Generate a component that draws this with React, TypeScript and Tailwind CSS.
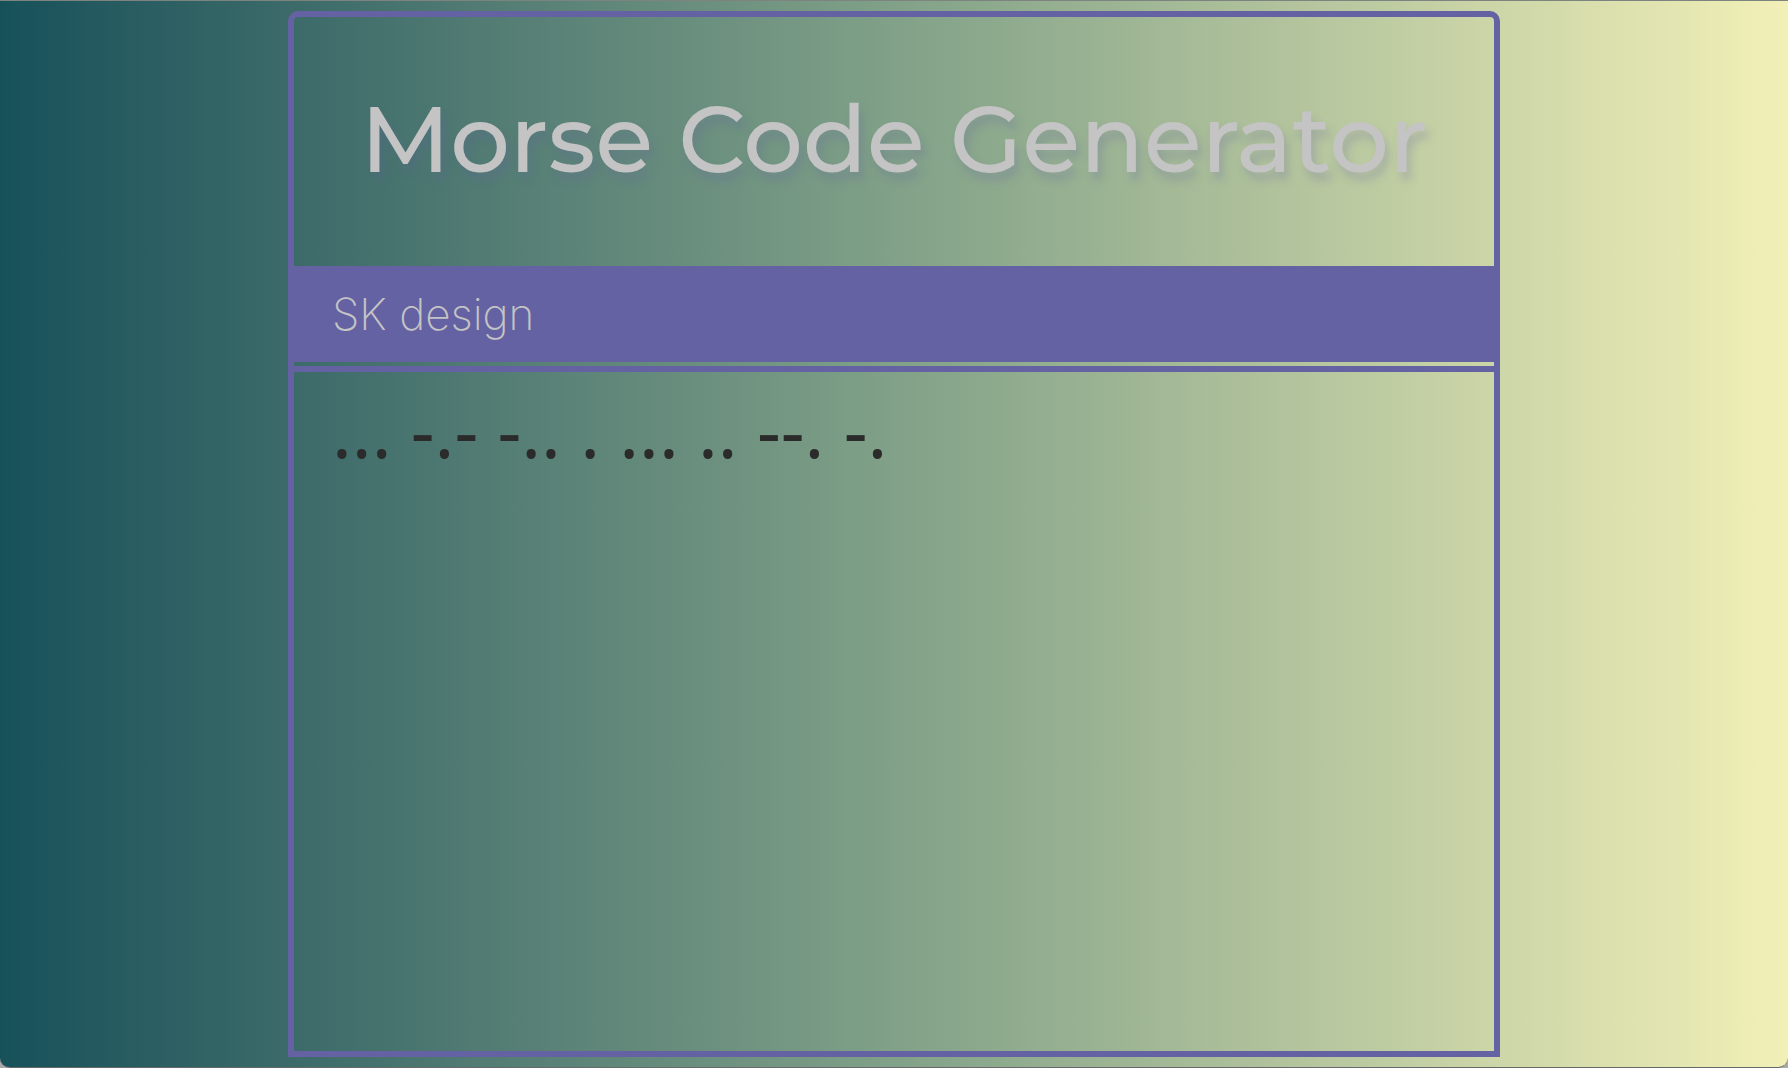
import { useState } from "react";

const MORSE: Record<string, string> = {
  a: ".-", b: "-...", c: "-.-.", d: "-..", e: ".", f: "..-.", g: "--.", h: "....", i: "..",
  j: ".---", k: "-.-", l: ".-..", m: "--", n: "-.", o: "---", p: ".--.", q: "--.-", r: ".-.",
  s: "...", t: "-", u: "..-", v: "...-", w: ".--", x: "-..-", y: "-.--", z: "--..",
  "0": "-----", "1": ".----", "2": "..---", "3": "...--", "4": "....-", "5": ".....",
  "6": "-....", "7": "--...", "8": "---..", "9": "----.",
};

function toMorse(text: string) {
  return [...text.toLowerCase()]
    .map((c) => MORSE[c])
    .filter(Boolean)
    .join(" ");
}

export default function App() {
  const [text, setText] = useState("SK design");

  return (
    <div className="min-h-screen bg-[#a9a9a9]">
      <div className="flex min-h-screen justify-center rounded-b-[10px] border-y border-t-[#7d8480] border-b-[#66686a] bg-linear-to-r from-[#16515a] via-[#81a188] to-[#f2f0b7] py-2.5">
        <main className="flex w-full max-w-[1212px] flex-col">
          <header className="rounded-t-[10px] border-6 border-b-0 border-[#6462a3] px-4 pt-[50px] pb-[55px]">
            <h1 className="text-center font-['Montserrat','Inter',sans-serif] text-[94px] leading-[144px] font-medium text-[#c4c4c4] [text-shadow:4px_8px_8px_rgba(101,97,164,0.25)]">
              Morse Code Generator
            </h1>
          </header>
          <div className="border-x-6 border-[#6462a3] pb-1">
            <input
              aria-label="Text to translate"
              value={text}
              onChange={(e) => setText(e.target.value)}
              className="block h-24 w-full bg-[#6462a3] px-[38px] font-['Inter',sans-serif] text-[44px] font-extralight text-[#c4c4c4] outline-none"
            />
          </div>
          <output className="block flex-1 border-6 border-[#6462a3] px-[38px] py-[18px] font-['Noto_Sans',sans-serif] text-[74px] leading-[80px] font-normal break-words text-[#2b2b2b]">
            {toMorse(text)}
          </output>
        </main>
      </div>
    </div>
  );
}
